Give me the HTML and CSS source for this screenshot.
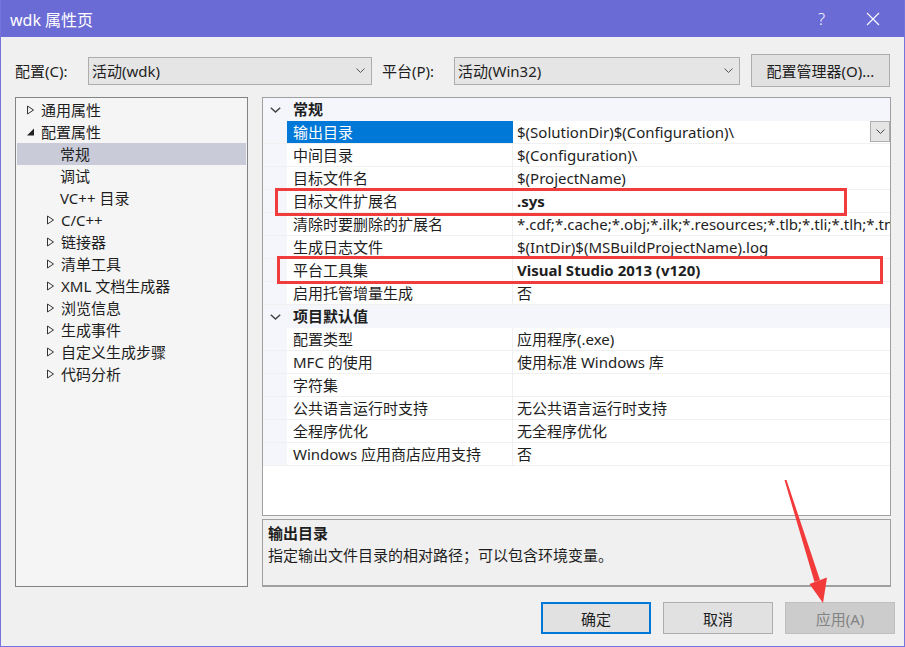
FILE: index.html
```html
<!DOCTYPE html>
<html lang="zh-CN">
<head>
    <meta charset="UTF-8">
    <title>wdk 属性页</title>
    <link rel="stylesheet" href="styles.css">
</head>
<body>

    <div class="window">
        <div class="titlebar">
            <span class="title">wdk 属性页</span>
            <span class="help">?</span>
            <svg class="close" width="14" height="14" viewBox="0 0 14 14">
                <path d="M1 1 L13 13 M13 1 L1 13" stroke="#fff" stroke-width="1.1" fill="none"/>
            </svg>
        </div>

        <div class="toolbar">
            <span class="label">配置(C):</span>
            <div class="combo combo-config">
                <span>活动(wdk)</span>
                <svg class="chev" width="9" height="5" viewBox="0 0 9 5"><path d="M0.5 0.5 L4.5 4.5 L8.5 0.5" stroke="#555" fill="none"/></svg>
            </div>
            <span class="label label-platform">平台(P):</span>
            <div class="combo combo-platform">
                <span>活动(Win32)</span>
                <svg class="chev" width="9" height="5" viewBox="0 0 9 5"><path d="M0.5 0.5 L4.5 4.5 L8.5 0.5" stroke="#555" fill="none"/></svg>
            </div>
            <button class="btn btn-manager">配置管理器(O)...</button>
        </div>

        <div class="content">
            <div class="tree">
                <div class="node lv1"><svg class="tw" width="9" height="10" viewBox="0 0 9 10"><path d="M1.5 1 L7.5 5 L1.5 9 Z" stroke="#333" fill="none"/></svg>通用属性</div>
                <div class="node lv1"><svg class="tw" width="9" height="10" viewBox="0 0 9 10"><path d="M8 1.5 L8 8.5 L1 8.5 Z" fill="#222"/></svg>配置属性</div>
                <div class="node lv2 leaf selected">常规</div>
                <div class="node lv2 leaf">调试</div>
                <div class="node lv2 leaf">VC++ 目录</div>
                <div class="node lv2"><svg class="tw" width="9" height="10" viewBox="0 0 9 10"><path d="M1.5 1 L7.5 5 L1.5 9 Z" stroke="#333" fill="none"/></svg>C/C++</div>
                <div class="node lv2"><svg class="tw" width="9" height="10" viewBox="0 0 9 10"><path d="M1.5 1 L7.5 5 L1.5 9 Z" stroke="#333" fill="none"/></svg>链接器</div>
                <div class="node lv2"><svg class="tw" width="9" height="10" viewBox="0 0 9 10"><path d="M1.5 1 L7.5 5 L1.5 9 Z" stroke="#333" fill="none"/></svg>清单工具</div>
                <div class="node lv2"><svg class="tw" width="9" height="10" viewBox="0 0 9 10"><path d="M1.5 1 L7.5 5 L1.5 9 Z" stroke="#333" fill="none"/></svg>XML 文档生成器</div>
                <div class="node lv2"><svg class="tw" width="9" height="10" viewBox="0 0 9 10"><path d="M1.5 1 L7.5 5 L1.5 9 Z" stroke="#333" fill="none"/></svg>浏览信息</div>
                <div class="node lv2"><svg class="tw" width="9" height="10" viewBox="0 0 9 10"><path d="M1.5 1 L7.5 5 L1.5 9 Z" stroke="#333" fill="none"/></svg>生成事件</div>
                <div class="node lv2"><svg class="tw" width="9" height="10" viewBox="0 0 9 10"><path d="M1.5 1 L7.5 5 L1.5 9 Z" stroke="#333" fill="none"/></svg>自定义生成步骤</div>
                <div class="node lv2"><svg class="tw" width="9" height="10" viewBox="0 0 9 10"><path d="M1.5 1 L7.5 5 L1.5 9 Z" stroke="#333" fill="none"/></svg>代码分析</div>
            </div>

            <div class="right">
                <div class="grid">
                    <div class="cat">
                        <span class="gutter"><svg width="11" height="6" viewBox="0 0 11 6"><path d="M0.8 0.8 L5.5 5 L10.2 0.8" stroke="#444" stroke-width="1.5" fill="none"/></svg></span>
                        <span class="cat-name">常规</span>
                    </div>
                    <div class="row">
                        <span class="gutter"></span>
                        <span class="name selected">输出目录</span>
                        <span class="value">
                            <span class="text">$(SolutionDir)$(Configuration)\</span>
                            <span class="drop"><svg width="9" height="5" viewBox="0 0 9 5"><path d="M0.5 0.5 L4.5 4.5 L8.5 0.5" stroke="#444" fill="none"/></svg></span>
                        </span>
                    </div>
                    <div class="row"><span class="gutter"></span><span class="name">中间目录</span><span class="value"><span class="text">$(Configuration)\</span></span></div>
                    <div class="row"><span class="gutter"></span><span class="name">目标文件名</span><span class="value"><span class="text">$(ProjectName)</span></span></div>
                    <div class="row"><span class="gutter"></span><span class="name">目标文件扩展名</span><span class="value"><span class="text bold">.sys</span></span></div>
                    <div class="row"><span class="gutter"></span><span class="name">清除时要删除的扩展名</span><span class="value"><span class="text">*.cdf;*.cache;*.obj;*.ilk;*.resources;*.tlb;*.tli;*.tlh;*.tmp;*.rsp;*.pgc;*.pgd;*.meta</span></span></div>
                    <div class="row"><span class="gutter"></span><span class="name">生成日志文件</span><span class="value"><span class="text">$(IntDir)$(MSBuildProjectName).log</span></span></div>
                    <div class="row"><span class="gutter"></span><span class="name">平台工具集</span><span class="value"><span class="text bold">Visual Studio 2013 (v120)</span></span></div>
                    <div class="row"><span class="gutter"></span><span class="name">启用托管增量生成</span><span class="value"><span class="text">否</span></span></div>
                    <div class="cat">
                        <span class="gutter"><svg width="11" height="6" viewBox="0 0 11 6"><path d="M0.8 0.8 L5.5 5 L10.2 0.8" stroke="#444" stroke-width="1.5" fill="none"/></svg></span>
                        <span class="cat-name">项目默认值</span>
                    </div>
                    <div class="row"><span class="gutter"></span><span class="name">配置类型</span><span class="value"><span class="text">应用程序(.exe)</span></span></div>
                    <div class="row"><span class="gutter"></span><span class="name">MFC 的使用</span><span class="value"><span class="text">使用标准 Windows 库</span></span></div>
                    <div class="row"><span class="gutter"></span><span class="name">字符集</span><span class="value"><span class="text"></span></span></div>
                    <div class="row"><span class="gutter"></span><span class="name">公共语言运行时支持</span><span class="value"><span class="text">无公共语言运行时支持</span></span></div>
                    <div class="row"><span class="gutter"></span><span class="name">全程序优化</span><span class="value"><span class="text">无全程序优化</span></span></div>
                    <div class="row"><span class="gutter"></span><span class="name">Windows 应用商店应用支持</span><span class="value"><span class="text">否</span></span></div>
                </div>

                <div class="desc">
                    <div class="desc-title">输出目录</div>
                    <div class="desc-text">指定输出文件目录的相对路径；可以包含环境变量。</div>
                </div>
            </div>
        </div>

        <div class="footer">
            <button class="btn btn-ok">确定</button>
            <button class="btn btn-cancel">取消</button>
            <button class="btn btn-apply" disabled>应用(A)</button>
        </div>

        <!-- annotations drawn over the dialog -->
        <div class="mark mark-ext"></div>
        <div class="mark mark-toolset"></div>
        <svg class="arrow" width="905" height="647" viewBox="0 0 905 647">
            <path d="M783.5 480 L785.5 480 L819 580 L813.5 582 Z" fill="#f23a3a"/>
            <path d="M808.5 584 L826 577.5 L822 603 Z" fill="#f23a3a"/>
        </svg>
    </div>

</body>
</html>
```

FILE: styles.css
```css
body {
    margin: 0;
    font-family: "Noto Sans", "Noto Sans CJK SC", sans-serif;
    font-size: 15px;
    color: #1e1e1e;
}

.window {
    position: relative;
    width: 905px;
    height: 647px;
    box-sizing: border-box;
    background: #f0f0f0;
    border: 1px solid #7474dc;
    border-top: none;
    display: flex;
    flex-direction: column;
    overflow: hidden;
}

.titlebar {
    height: 37px;
    margin: 0 -1px;
    background: #6b6bd6;
    color: #fff;
    display: flex;
    align-items: center;
    flex-shrink: 0;
}

.title {
    font-size: 16px;
    margin-left: 10px;
    flex: 1;
}

.help {
    font-size: 16px;
    font-weight: 300;
    margin-right: 41px;
}

.close {
    margin-right: 25px;
}

.toolbar {
    display: flex;
    align-items: center;
    padding: 17px 0 10px 14px;
    flex-shrink: 0;
}

.label {
    width: 73px;
    line-height: 20px;
}

.label-platform {
    width: 72px;
    margin-left: 10px;
}

.combo {
    height: 28px;
    box-sizing: border-box;
    background: #e5e5e5;
    border: 1px solid #adadad;
    display: flex;
    align-items: center;
    padding: 0 6px 0 3px;
    justify-content: space-between;
}

.combo-config {
    width: 284px;
}

.combo-platform {
    width: 286px;
}

.btn {
    font-family: inherit;
    font-size: 15px;
    color: #1e1e1e;
    background: #e1e1e1;
    border: 1px solid #adadad;
    box-sizing: border-box;
    padding: 0;
}

.btn-manager {
    width: 139px;
    height: 33px;
    margin-left: 11px;
}

.content {
    height: 490px;
    display: flex;
    padding-left: 14px;
    flex-shrink: 0;
}

.tree {
    width: 233px;
    box-sizing: border-box;
    background: #f5f5f5;
    border: 1px solid #838383;
    padding-top: 1px;
}

.node {
    height: 22px;
    line-height: 22px;
    margin: 0 1px;
    display: flex;
    align-items: center;
    white-space: nowrap;
}

.node .tw {
    margin-right: 6px;
}

.lv1 {
    padding-left: 9px;
}

.lv2 {
    padding-left: 29px;
}

.lv2.leaf {
    padding-left: 43px;
}

.node.selected {
    background: #c9cbd9;
}

.right {
    width: 629px;
    margin-left: 14px;
    display: flex;
    flex-direction: column;
}

.grid {
    height: 419px;
    box-sizing: border-box;
    background: #fff;
    border: 1px solid #a0a0a0;
    overflow: hidden;
}

.cat, .row {
    display: flex;
    height: 23px;
    line-height: 22px;
    box-sizing: border-box;
    border-bottom: 1px solid #f0f0f0;
    white-space: nowrap;
}

.cat {
    background: #f4f6fb;
    border-bottom-color: #f4f6fb;
}

.gutter {
    width: 24px;
    flex-shrink: 0;
    background: #f4f6fb;
    display: flex;
    align-items: center;
    justify-content: center;
    padding-top: 1px;
}

.cat-name {
    font-weight: bold;
    padding-left: 6px;
}

.name {
    width: 226px;
    flex-shrink: 0;
    box-sizing: border-box;
    padding-left: 6px;
    border-right: 1px solid #f0f0f0;
}

.name.selected {
    background: #0078d7;
    color: #fff;
    border-right-color: #0078d7;
}

.value {
    flex: 1;
    display: flex;
    overflow: hidden;
    padding-left: 4px;
}

.value .text {
    flex: 1;
    overflow: hidden;
}

.bold {
    font-weight: bold;
}

.drop {
    width: 20px;
    height: 21px;
    box-sizing: border-box;
    margin: 0 0 0 2px;
    background: #e5e5e5;
    border: 1px solid #adadad;
    display: flex;
    align-items: center;
    justify-content: center;
}

.desc {
    height: 68px;
    margin-top: 3px;
    box-sizing: border-box;
    border: 1px solid #a0a0a0;
    border-bottom-width: 2px;
    padding: 2px 5px;
}

.desc-title {
    font-weight: bold;
    line-height: 22px;
}

.desc-text {
    line-height: 22px;
}

.footer {
    display: flex;
    justify-content: flex-end;
    padding: 15px 9px 0 0;
}

.footer .btn {
    width: 110px;
    height: 32px;
    margin-left: 12px;
}

.btn-ok {
    border: 2px solid #0078d7;
}

.btn-apply {
    width: 111px;
    background: #cccccc;
    border-color: #bfbfbf;
    color: #838383;
}

.mark {
    position: absolute;
    border: 3px solid #f03c3c;
    box-sizing: border-box;
}

.mark-ext {
    left: 274px;
    top: 188px;
    width: 572px;
    height: 28px;
}

.mark-toolset {
    left: 276px;
    top: 256px;
    width: 606px;
    height: 28px;
}

.arrow {
    position: absolute;
    left: 0;
    top: 0;
    pointer-events: none;
}
```
